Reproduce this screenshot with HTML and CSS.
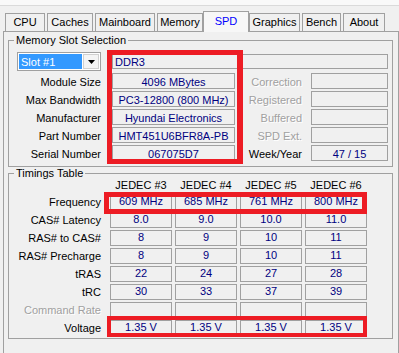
FILE: index.html
```html
<!DOCTYPE html>
<html>
<head>
<meta charset="utf-8">
<link rel="stylesheet" href="styles.css">
</head>
<body>
<div class="titlebar"></div>
<div class="tabs">
  <div class="tab w-cpu">CPU</div>
  <div class="tab w-caches">Caches</div>
  <div class="tab w-main">Mainboard</div>
  <div class="tab w-mem">Memory</div>
  <div class="tab active w-spd">SPD</div>
  <div class="tab w-gfx">Graphics</div>
  <div class="tab w-bench">Bench</div>
  <div class="tab w-about">About</div>
</div>
<div class="panel">
  <fieldset class="group slot">
    <legend class="legend-slot">Memory Slot Selection</legend>
    <div class="row first">
      <div class="combo">
        <span class="combo-sel">Slot #1</span>
        <span class="combo-btn"><svg width="7" height="4" viewBox="0 0 7 4"><path d="M0 0H7L3.5 4Z" fill="#000"/></svg></span>
      </div>
      <div class="field wide">DDR3</div>
    </div>
    <div class="row">
      <div class="label">Module Size</div>
      <div class="field mid">4096 MBytes</div>
      <div class="label2 disabled">Correction</div>
      <div class="field small"></div>
    </div>
    <div class="row">
      <div class="label">Max Bandwidth</div>
      <div class="field mid">PC3-12800 (800 MHz)</div>
      <div class="label2 disabled">Registered</div>
      <div class="field small"></div>
    </div>
    <div class="row">
      <div class="label">Manufacturer</div>
      <div class="field mid">Hyundai Electronics</div>
      <div class="label2 disabled">Buffered</div>
      <div class="field small"></div>
    </div>
    <div class="row">
      <div class="label">Part Number</div>
      <div class="field mid">HMT451U6BFR8A-PB</div>
      <div class="label2 disabled">SPD Ext.</div>
      <div class="field small"></div>
    </div>
    <div class="row">
      <div class="label">Serial Number</div>
      <div class="field mid">067075D7</div>
      <div class="label2">Week/Year</div>
      <div class="field small">47 / 15</div>
    </div>
  </fieldset>
  <fieldset class="group timings">
    <legend class="legend-tim">Timings Table</legend>
    <div class="trow head">
      <div class="label"></div>
      <div class="hcell">JEDEC #3</div>
      <div class="hcell">JEDEC #4</div>
      <div class="hcell">JEDEC #5</div>
      <div class="hcell">JEDEC #6</div>
    </div>
    <div class="trow">
      <div class="label">Frequency</div>
      <div class="cell">609 MHz</div><div class="cell">685 MHz</div><div class="cell">761 MHz</div><div class="cell">800 MHz</div>
    </div>
    <div class="trow">
      <div class="label">CAS# Latency</div>
      <div class="cell">8.0</div><div class="cell">9.0</div><div class="cell">10.0</div><div class="cell">11.0</div>
    </div>
    <div class="trow">
      <div class="label">RAS# to CAS#</div>
      <div class="cell">8</div><div class="cell">9</div><div class="cell">10</div><div class="cell">11</div>
    </div>
    <div class="trow">
      <div class="label">RAS# Precharge</div>
      <div class="cell">8</div><div class="cell">9</div><div class="cell">10</div><div class="cell">11</div>
    </div>
    <div class="trow">
      <div class="label">tRAS</div>
      <div class="cell">22</div><div class="cell">24</div><div class="cell">27</div><div class="cell">28</div>
    </div>
    <div class="trow">
      <div class="label">tRC</div>
      <div class="cell">30</div><div class="cell">33</div><div class="cell">37</div><div class="cell">39</div>
    </div>
    <div class="trow">
      <div class="label disabled">Command Rate</div>
      <div class="cell"></div><div class="cell"></div><div class="cell"></div><div class="cell"></div>
    </div>
    <div class="trow">
      <div class="label">Voltage</div>
      <div class="cell">1.35 V</div><div class="cell">1.35 V</div><div class="cell">1.35 V</div><div class="cell">1.35 V</div>
    </div>
  </fieldset>
</div>
<div class="mark mark-mem"></div>
<div class="mark mark-freq"></div>
<div class="mark mark-volt"></div>
</body>
</html>
```

FILE: styles.css
```css
* { box-sizing: border-box; }
html, body { margin: 0; padding: 0; }
body {
  position: relative;
  width: 399px;
  height: 353px;
  overflow: hidden;
  background: #f0f0f0;
  font-family: "Liberation Sans", Arial, sans-serif;
  font-size: 11px;
  color: #000;
}
.titlebar {
  height: 6px;
  background: #f9f9f9;
  border-bottom: 1px solid #dadada;
}
.tabs {
  display: flex;
  align-items: flex-end;
  height: 25px;
  padding-left: 5px;
}
.tab {
  height: 18px;
  border: 1px solid #a0a0a0;
  border-bottom: none;
  margin-right: 2px;
  text-align: center;
  line-height: 16px;
  background: #f0f0f0;
  white-space: nowrap;
}
.tab.active {
  height: 21px;
  margin-bottom: -1px;
  position: relative;
  z-index: 1;
  color: #0000ff;
  background: #f7f7f7;
  line-height: 18px;
}
.w-cpu { width: 40px; }
.w-caches { width: 46px; }
.w-main { width: 60px; }
.w-mem { width: 46px; margin-right: 0; }
.w-spd { width: 46px; margin-right: 0; }
.w-gfx { width: 51px; }
.w-bench { width: 39px; }
.w-about { width: 42px; }

.panel {
  margin-left: 3px;
  width: 396px;
  height: 330px;
  border: 1px solid #a0a0a0;
  border-bottom: none;
  padding: 1px 0 0 4px;
}
.group {
  margin: 0;
  min-width: 0;
  width: 385px;
  border: 1px solid #a0a0a0;
  padding: 5px 0 5px 0;
}
.group legend {
  margin-left: 5px;
  padding: 0 2px;
}
.legend-slot { line-height: 14px; }
.legend-tim { line-height: 13px; }
.group.timings { padding: 0 0 2px 0; }

.row {
  display: flex;
  align-items: flex-start;
  height: 16px;
  margin-top: 2px;
  padding-left: 8px;
}
.row.first {
  height: 19px;
  margin-top: 0;
  align-items: center;
}
.label {
  width: 84px;
  height: 16px;
  margin-right: 11px;
  text-align: right;
  white-space: nowrap;
  line-height: 18px;
}
.label2 {
  width: 67px;
  height: 16px;
  margin-right: 9px;
  text-align: right;
  white-space: nowrap;
  line-height: 18px;
}
.disabled {
  color: #a0a0a0;
  text-shadow: 1px 1px 0 #ffffff;
}
.field {
  height: 16px;
  border: 1px solid #a0a0a0;
  color: #000080;
  text-align: center;
  line-height: 16px;
  white-space: nowrap;
}
.field.mid { width: 123px; }
.field.small { width: 77px; }
.field.wide {
  width: 276px;
  height: 15px;
  text-align: left;
  padding-left: 2px;
  line-height: 14px;
}
.combo {
  width: 84px;
  height: 19px;
  margin-right: 11px;
  border: 1px solid #a0a0a0;
  background: #ffffff;
  padding: 1px;
  display: flex;
}
.combo-sel {
  flex: 1;
  height: 15px;
  background: #3399ff;
  color: #ffffff;
  padding-left: 2px;
  line-height: 17px;
  white-space: nowrap;
}
.combo-btn {
  width: 16px;
  height: 15px;
  margin-left: 1px;
  border: 1px solid #d0d0d0;
  background: #f4f4f4;
  display: flex;
  align-items: center;
  justify-content: center;
}

.trow {
  display: flex;
  height: 16px;
  margin-top: 2px;
  padding-left: 8px;
}
.trow .label {
  margin-right: 9px;
  line-height: 16px;
}
.trow.head {
  height: 12px;
  margin-top: 0;
}
.hcell {
  width: 62px;
  margin-right: 3px;
  text-align: center;
  line-height: 10px;
  white-space: nowrap;
}
.cell {
  width: 62px;
  height: 16px;
  margin-right: 3px;
  border: 1px solid #a0a0a0;
  text-align: center;
  color: #000080;
  line-height: 13px;
}

.mark {
  position: absolute;
  border: 5px solid #ed1c24;
}
.mark-mem {
  left: 107px;
  top: 50px;
  width: 136px;
  height: 114px;
  border-right-width: 6px;
}
.mark-freq {
  left: 104px;
  top: 192px;
  width: 263px;
  height: 22px;
}
.mark-volt {
  left: 107px;
  top: 316px;
  width: 260px;
  height: 21px;
  border-width: 4px;
}
```
